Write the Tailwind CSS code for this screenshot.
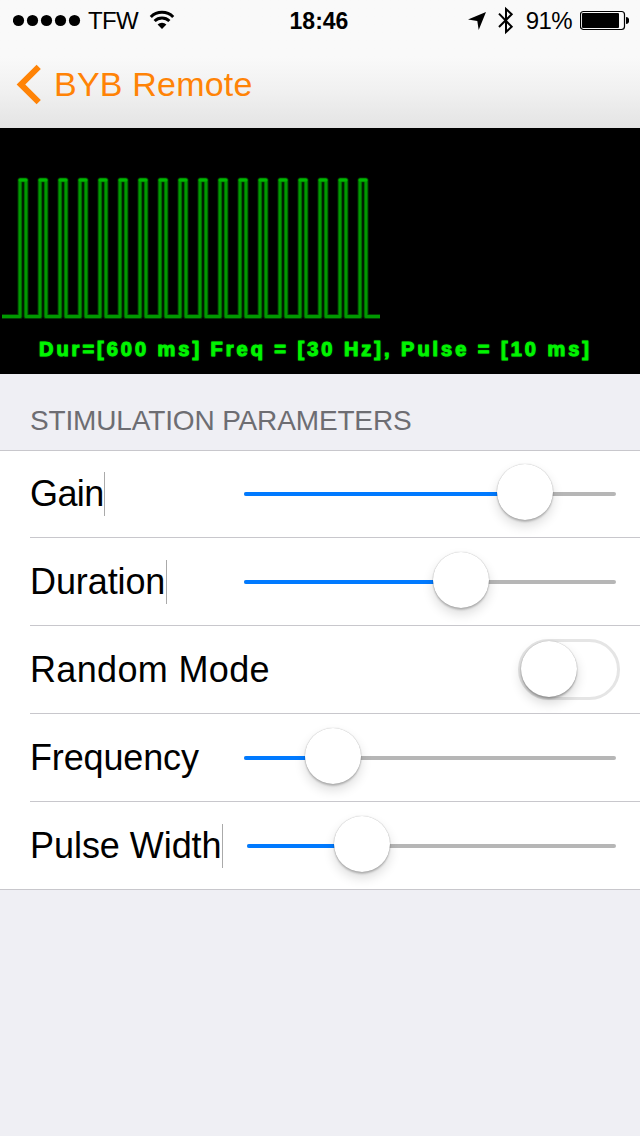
<!DOCTYPE html>
<html lang="en">
  <head>
    <meta charset="UTF-8" />
    <meta name="viewport" content="width=device-width, initial-scale=1.0" />
    <title>BYB Remote</title>
    <script src="https://cdn.jsdelivr.net/npm/@tailwindcss/browser@4"></script>
  </head>
  <body class="bg-[#efeff4] font-['Liberation_Sans',Arial,sans-serif] text-black">
    <div class="w-[640px] h-[1136px] overflow-hidden">
      <!-- status bar + nav bar -->
      <header class="h-32 bg-linear-to-b from-[#f9f9f9] from-45% via-[#f1f1f1] via-70% to-[#e4e4e4]">
        <div class="h-10 grid grid-cols-3 items-center pl-[13px] pr-[11px] text-2xl leading-9">
          <div class="flex items-center">
            <svg class="w-[68px] h-10" viewBox="0 0 68 40">
              <circle cx="5.5" cy="20.5" r="5.6" />
              <circle cx="19.5" cy="20.5" r="5.6" />
              <circle cx="33.5" cy="20.5" r="5.6" />
              <circle cx="47.5" cy="20.5" r="5.6" />
              <circle cx="61.5" cy="20.5" r="5.6" />
            </svg>
            <span class="ml-[7px] pt-0.5 tracking-[-0.6px]">TFW</span>
            <svg class="w-[26px] h-10 ml-[11px]" viewBox="0 0 26 40" fill="none" stroke="#000" stroke-width="3">
              <path d="M1.8 17a15.8 15.8 0 0 1 22.4 0" />
              <path d="M5.6 21a10.5 10.5 0 0 1 14.8 0" />
              <path d="M8.6 24.5a6.3 6.3 0 0 1 8.8 0L13 29z" fill="#000" stroke="none" />
            </svg>
          </div>
          <span class="pt-0.5 pr-1 text-center font-bold text-[23px]">18:46</span>
          <div class="flex items-center justify-end">
            <svg class="w-[18px] h-10" viewBox="0 0 18 40">
              <path d="M18 12L10.7 30L9.3 20.9L0 19.5z" />
            </svg>
            <svg class="w-4 h-10 ml-3" viewBox="0 0 16 40" fill="none" stroke="#000" stroke-width="2">
              <path d="M1 13.6L13.7 26.7L8 32V9L13.7 14.3L1 27" />
            </svg>
            <span class="ml-3 pt-0.5 tracking-[-0.6px]">91%</span>
            <svg class="w-[49px] h-10 ml-2" viewBox="0 0 49 40">
              <rect x="0.5" y="11.5" width="44" height="18" rx="3" fill="none" stroke="#000" stroke-width="1.2" />
              <rect x="2" y="13" width="37" height="15" rx="1" />
              <path d="M46 17a3.2 3.5 0 0 1 0 7z" />
            </svg>
          </div>
        </div>
        <div class="h-[88px] flex items-center pl-4 text-[34px] text-[#ff8306]">
          <svg class="w-[26px] h-11" viewBox="0 0 26 44" fill="none" stroke="#ff8306" stroke-width="6">
            <path d="M22.7 4.8L4.9 22.5L22.7 40.2" />
          </svg>
          <span class="ml-3 leading-[88px] tracking-[0.2px]">BYB Remote</span>
        </div>
      </header>

      <!-- pulse train -->
      <section class="h-[246px] bg-black flex flex-col">
        <svg class="w-[640px] h-[206px] shrink-0" viewBox="0 128 640 206" fill="none">
          <path id="halo" stroke="#003c00" stroke-width="5" stroke-linejoin="round" />
          <path id="wave" stroke="#009a00" stroke-width="3" stroke-linejoin="round" />
          <path id="tops" stroke="#00b800" stroke-width="3" stroke-linecap="round" />
        </svg>
        <p class="pl-[39px] text-xl leading-[30px] font-bold text-[#00f800] tracking-[2.98px] whitespace-nowrap [-webkit-text-stroke:1px_#00f000] [text-shadow:0_0_2px_#00c000]">Dur=[600 ms] Freq = [30 Hz], Pulse = [10 ms]</p>
      </section>

      <h2 class="h-[76px] pl-[30px] pt-[31px] text-[28px] leading-8 text-[#6d6d72] tracking-[-0.15px]">STIMULATION PARAMETERS</h2>

      <div class="bg-white border-y border-[#c8c7cc]">
        <div class="h-[87px] ml-[30px] pb-[21px] pr-6 flex items-end border-b border-[#c8c7cc]">
          <span class="h-11 w-[75px] text-[36px] leading-11 tracking-[-0.6px] border-r border-[#aaa] whitespace-nowrap">Gain</span>
          <div class="relative h-11 w-[372px] ml-auto flex items-center">
            <div class="h-1 w-full rounded-full bg-[#b6b6b6]"><div class="h-1 rounded-full bg-[#007aff]" style="width: 281px"></div></div>
            <div class="absolute top-[-8px] size-14 -ml-7 rounded-full bg-white shadow-[0_0_1px_rgba(0,0,0,0.35),0_2px_2px_rgba(0,0,0,0.2),0_6px_12px_rgba(0,0,0,0.14)]" style="left: 281px"></div>
          </div>
        </div>
        <div class="h-[88px] ml-[30px] pb-[21px] pr-6 flex items-end border-b border-[#c8c7cc]">
          <span class="h-11 w-[137px] text-[36px] leading-11 tracking-[-0.1px] border-r border-[#aaa] whitespace-nowrap">Duration</span>
          <div class="relative h-11 w-[372px] ml-auto flex items-center">
            <div class="h-1 w-full rounded-full bg-[#b6b6b6]"><div class="h-1 rounded-full bg-[#007aff]" style="width: 217px"></div></div>
            <div class="absolute top-[-8px] size-14 -ml-7 rounded-full bg-white shadow-[0_0_1px_rgba(0,0,0,0.35),0_2px_2px_rgba(0,0,0,0.2),0_6px_12px_rgba(0,0,0,0.14)]" style="left: 217px"></div>
          </div>
        </div>
        <div class="h-[88px] ml-[30px] pr-5 flex items-end border-b border-[#c8c7cc]">
          <span class="h-11 mb-[21px] text-[36px] leading-11 tracking-[0.35px] whitespace-nowrap">Random Mode</span>
          <div class="ml-auto mb-[13px] w-[102px] h-[61px] rounded-full border-3 border-[#e5e5e5]">
            <div class="size-14 -mt-px rounded-full bg-white shadow-[0_0_1px_rgba(0,0,0,0.35),0_2px_2px_rgba(0,0,0,0.25),0_6px_12px_rgba(0,0,0,0.16)]"></div>
          </div>
        </div>
        <div class="h-[88px] ml-[30px] pb-[21px] pr-6 flex items-end border-b border-[#c8c7cc]">
          <span class="h-11 text-[36px] leading-11 tracking-[-0.15px] whitespace-nowrap">Frequency</span>
          <div class="relative h-11 w-[372px] ml-auto flex items-center">
            <div class="h-1 w-full rounded-full bg-[#b6b6b6]"><div class="h-1 rounded-full bg-[#007aff]" style="width: 89px"></div></div>
            <div class="absolute top-[-8px] size-14 -ml-7 rounded-full bg-white shadow-[0_0_1px_rgba(0,0,0,0.35),0_2px_2px_rgba(0,0,0,0.2),0_6px_12px_rgba(0,0,0,0.14)]" style="left: 89px"></div>
          </div>
        </div>
        <div class="h-[87px] ml-[30px] pb-[21px] pr-6 flex items-end">
          <span class="h-11 w-[193px] text-[36px] leading-11 tracking-[-0.05px] border-r border-[#aaa] whitespace-nowrap">Pulse Width</span>
          <div class="relative h-11 w-[369px] ml-auto flex items-center">
            <div class="h-1 w-full rounded-full bg-[#b6b6b6]"><div class="h-1 rounded-full bg-[#007aff]" style="width: 115px"></div></div>
            <div class="absolute top-[-8px] size-14 -ml-7 rounded-full bg-white shadow-[0_0_1px_rgba(0,0,0,0.35),0_2px_2px_rgba(0,0,0,0.2),0_6px_12px_rgba(0,0,0,0.14)]" style="left: 114.5px"></div>
          </div>
        </div>
      </div>
    </div>
    <script>
      const pulses = 18;
      let wave = "M2 316.5";
      let tops = "";
      for (let i = 0; i < pulses; i++) {
        const x = 20 + i * 20;
        wave += `H${x}V180H${x + 6}V316.5`;
        tops += `M${x} 180H${x + 6}`;
      }
      wave += "H380";
      document.getElementById("halo").setAttribute("d", wave);
      document.getElementById("wave").setAttribute("d", wave);
      document.getElementById("tops").setAttribute("d", tops);
    </script>
  </body>
</html>
